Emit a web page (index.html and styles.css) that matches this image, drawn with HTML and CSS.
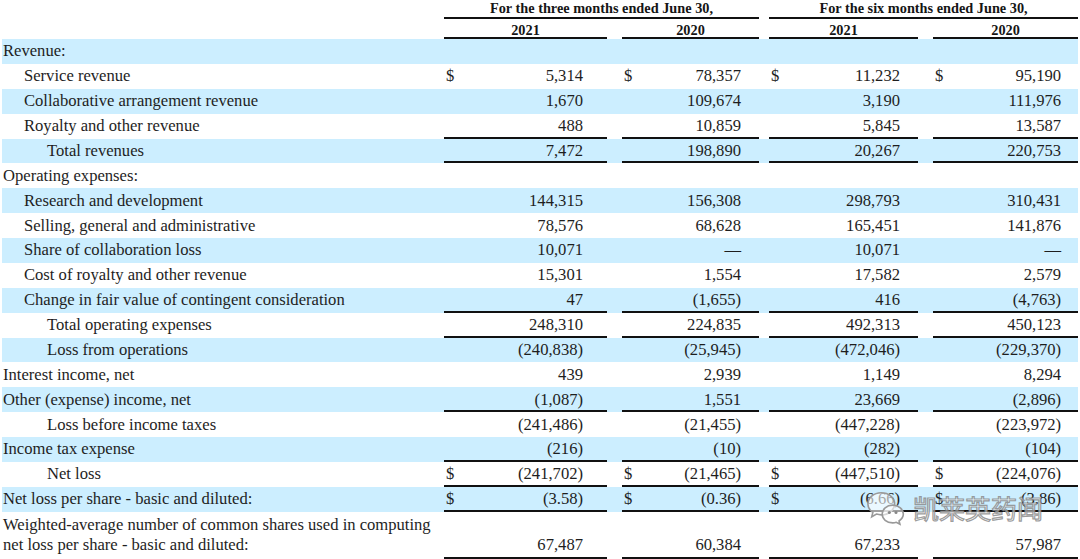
FILE: index.html
```html
<!DOCTYPE html>
<html lang="en">
<head>
<meta charset="utf-8">
<title>Statement of Operations</title>
<link rel="stylesheet" href="styles.css">
</head>
<body>
<div class="page">
<table class="fin">
<colgroup>
<col class="c-label"><col class="c-d"><col class="c-v1"><col class="c-g15"><col class="c-d"><col class="c-v2"><col class="c-g10"><col class="c-d"><col class="c-v3"><col class="c-g15"><col class="c-d"><col class="c-v4">
</colgroup>
<thead>
<tr class="h1"><th></th><th colspan="5" class="u">For the three months ended June 30,</th><th></th><th colspan="5" class="u">For the six months ended June 30,</th></tr>
<tr class="h2"><th></th><th colspan="2" class="u">2021</th><th></th><th colspan="2" class="u">2020</th><th></th><th colspan="2" class="u">2021</th><th></th><th colspan="2" class="u">2020</th></tr>
</thead>
<tbody>
<tr class="r b"><td class="l0">Revenue:</td><td></td><td></td><td></td><td></td><td></td><td></td><td></td><td></td><td></td><td></td><td></td></tr>
<tr class="r"><td class="l1">Service revenue</td><td class="d">$</td><td class="v v1">5,314</td><td></td><td class="d">$</td><td class="v v2">78,357</td><td></td><td class="d">$</td><td class="v v3">11,232</td><td></td><td class="d">$</td><td class="v v4">95,190</td></tr>
<tr class="r b"><td class="l1">Collaborative arrangement revenue</td><td class="d"></td><td class="v v1">1,670</td><td></td><td class="d"></td><td class="v v2">109,674</td><td></td><td class="d"></td><td class="v v3">3,190</td><td></td><td class="d"></td><td class="v v4">111,976</td></tr>
<tr class="r ul"><td class="l1">Royalty and other revenue</td><td class="d"></td><td class="v v1">488</td><td></td><td class="d"></td><td class="v v2">10,859</td><td></td><td class="d"></td><td class="v v3">5,845</td><td></td><td class="d"></td><td class="v v4">13,587</td></tr>
<tr class="r b ul"><td class="l2">Total revenues</td><td class="d"></td><td class="v v1">7,472</td><td></td><td class="d"></td><td class="v v2">198,890</td><td></td><td class="d"></td><td class="v v3">20,267</td><td></td><td class="d"></td><td class="v v4">220,753</td></tr>
<tr class="r"><td class="l0">Operating expenses:</td><td></td><td></td><td></td><td></td><td></td><td></td><td></td><td></td><td></td><td></td><td></td></tr>
<tr class="r b"><td class="l1">Research and development</td><td class="d"></td><td class="v v1">144,315</td><td></td><td class="d"></td><td class="v v2">156,308</td><td></td><td class="d"></td><td class="v v3">298,793</td><td></td><td class="d"></td><td class="v v4">310,431</td></tr>
<tr class="r"><td class="l1">Selling, general and administrative</td><td class="d"></td><td class="v v1">78,576</td><td></td><td class="d"></td><td class="v v2">68,628</td><td></td><td class="d"></td><td class="v v3">165,451</td><td></td><td class="d"></td><td class="v v4">141,876</td></tr>
<tr class="r b"><td class="l1">Share of collaboration loss</td><td class="d"></td><td class="v v1">10,071</td><td></td><td class="d"></td><td class="v v2">—</td><td></td><td class="d"></td><td class="v v3">10,071</td><td></td><td class="d"></td><td class="v v4">—</td></tr>
<tr class="r"><td class="l1">Cost of royalty and other revenue</td><td class="d"></td><td class="v v1">15,301</td><td></td><td class="d"></td><td class="v v2">1,554</td><td></td><td class="d"></td><td class="v v3">17,582</td><td></td><td class="d"></td><td class="v v4">2,579</td></tr>
<tr class="r b ul"><td class="l1">Change in fair value of contingent consideration</td><td class="d"></td><td class="v v1">47</td><td></td><td class="d"></td><td class="v v2">(1,655)</td><td></td><td class="d"></td><td class="v v3">416</td><td></td><td class="d"></td><td class="v v4">(4,763)</td></tr>
<tr class="r ul"><td class="l2">Total operating expenses</td><td class="d"></td><td class="v v1">248,310</td><td></td><td class="d"></td><td class="v v2">224,835</td><td></td><td class="d"></td><td class="v v3">492,313</td><td></td><td class="d"></td><td class="v v4">450,123</td></tr>
<tr class="r b"><td class="l2">Loss from operations</td><td class="d"></td><td class="v v1">(240,838)</td><td></td><td class="d"></td><td class="v v2">(25,945)</td><td></td><td class="d"></td><td class="v v3">(472,046)</td><td></td><td class="d"></td><td class="v v4">(229,370)</td></tr>
<tr class="r"><td class="l0">Interest income, net</td><td class="d"></td><td class="v v1">439</td><td></td><td class="d"></td><td class="v v2">2,939</td><td></td><td class="d"></td><td class="v v3">1,149</td><td></td><td class="d"></td><td class="v v4">8,294</td></tr>
<tr class="r b ul"><td class="l0">Other (expense) income, net</td><td class="d"></td><td class="v v1">(1,087)</td><td></td><td class="d"></td><td class="v v2">1,551</td><td></td><td class="d"></td><td class="v v3">23,669</td><td></td><td class="d"></td><td class="v v4">(2,896)</td></tr>
<tr class="r"><td class="l2">Loss before income taxes</td><td class="d"></td><td class="v v1">(241,486)</td><td></td><td class="d"></td><td class="v v2">(21,455)</td><td></td><td class="d"></td><td class="v v3">(447,228)</td><td></td><td class="d"></td><td class="v v4">(223,972)</td></tr>
<tr class="r b ul"><td class="l0">Income tax expense</td><td class="d"></td><td class="v v1">(216)</td><td></td><td class="d"></td><td class="v v2">(10)</td><td></td><td class="d"></td><td class="v v3">(282)</td><td></td><td class="d"></td><td class="v v4">(104)</td></tr>
<tr class="r ul"><td class="l2">Net loss</td><td class="d">$</td><td class="v v1">(241,702)</td><td></td><td class="d">$</td><td class="v v2">(21,465)</td><td></td><td class="d">$</td><td class="v v3">(447,510)</td><td></td><td class="d">$</td><td class="v v4">(224,076)</td></tr>
<tr class="r b ul"><td class="l0">Net loss per share - basic and diluted:</td><td class="d">$</td><td class="v v1">(3.58)</td><td></td><td class="d">$</td><td class="v v2">(0.36)</td><td></td><td class="d">$</td><td class="v v3">(6.66)</td><td></td><td class="d">$</td><td class="v v4">(3.86)</td></tr>
<tr class="wr ul"><td class="l0 wl">Weighted-average number of common shares used in computing<br>net loss per share - basic and diluted:</td><td class="d"></td><td class="v v1">67,487</td><td></td><td class="d"></td><td class="v v2">60,384</td><td></td><td class="d"></td><td class="v v3">67,233</td><td></td><td class="d"></td><td class="v v4">57,987</td></tr>
</tbody>
</table>
<div class="wm">
<svg class="wm-icon" width="40" height="36" viewBox="0 0 42 36">
<path d="M16 2 C8 2 2 7.4 2 13.8 C2 17.4 4 20.6 7.2 22.6 L6 27.2 L11 24.4 C12.6 24.9 14.3 25.2 16 25.2 C24 25.2 30 19.8 30 13.6 C30 7.3 24 2 16 2 Z" fill="rgba(255,255,255,0.6)" stroke="#999" stroke-width="1.7"/>
<path d="M28 15 C21.6 15 17 19.4 17 24.4 C17 29.4 21.6 33.6 28 33.6 C29.3 33.6 30.6 33.4 31.8 33 L35.6 35 L34.7 31.6 C37.5 29.8 39.2 27.3 39.2 24.4 C39.2 19.4 34.4 15 28 15 Z" fill="rgba(255,255,255,0.6)" stroke="#999" stroke-width="1.7"/>
<circle cx="24.5" cy="22.8" r="1.6" fill="#888"/>
<circle cx="31.5" cy="22.8" r="1.6" fill="#888"/>
</svg>
<span class="wm-text">凯莱英药闻</span>
</div>
</div>
</body>
</html>
```
FILE: styles.css
```css
html, body {
  margin: 0;
  padding: 0;
  background: #fff;
}
body {
  font-family: "Liberation Serif", "Times New Roman", serif;
  color: #1e1e1e;
}
.page {
  position: relative;
  width: 1080px;
  height: 559px;
  overflow: hidden;
  padding-left: 2px;
  box-sizing: border-box;
}
.fin {
  border-collapse: separate;
  border-spacing: 0;
  table-layout: fixed;
  width: 1076px;
}
.c-label { width: 442px; }
.c-d { width: 20px; }
.c-v1 { width: 143px; }
.c-v2 { width: 117px; }
.c-v3 { width: 129px; }
.c-v4 { width: 125px; }
.c-g15 { width: 15px; }
.c-g10 { width: 10px; }

th, td {
  padding: 0;
  white-space: nowrap;
}
th {
  font-size: 14.3px;
  font-weight: bold;
  line-height: 16px;
  text-align: center;
  vertical-align: top;
  color: #151515;
}
.h1 { height: 19px; }
.h2 { height: 20px; }
.h2 th { padding-top: 3px; }
th.u { box-shadow: inset 0 -2px 0 #111; }

.r { height: 24.89px; }
.r td {
  font-size: 16.6px;
  line-height: 24px;
  vertical-align: middle;
}
.b td { background: #cceeff; }
.ul td.d, .ul td.v { box-shadow: inset 0 -2px 0 #111; }

.l0 { padding-left: 1px; }
.l1 { padding-left: 22px; }
.l2 { padding-left: 45px; }
.d { text-align: left; padding-left: 2px; }
.v { text-align: right; }
.v1 { padding-right: 24px; }
.v2 { padding-right: 18px; }
.v3 { padding-right: 18px; }
.v4 { padding-right: 17px; }

.wr td {
  font-size: 16.6px;
  line-height: 20px;
  vertical-align: bottom;
  padding-bottom: 4px;
}
.wr td.wl {
  white-space: normal;
  padding-top: 3px;
}

.wm {
  position: absolute;
  left: 866px;
  top: 490px;
  display: flex;
  align-items: center;
  gap: 7px;
  pointer-events: none;
}
.wm-icon { display: block; }
.wm-text {
  font-family: "Noto Sans CJK SC", sans-serif;
  font-size: 26px;
  line-height: 36px;
  color: rgba(255, 255, 255, 0.6);
  -webkit-text-stroke: 1.2px rgba(130, 130, 130, 0.8);
}
```
